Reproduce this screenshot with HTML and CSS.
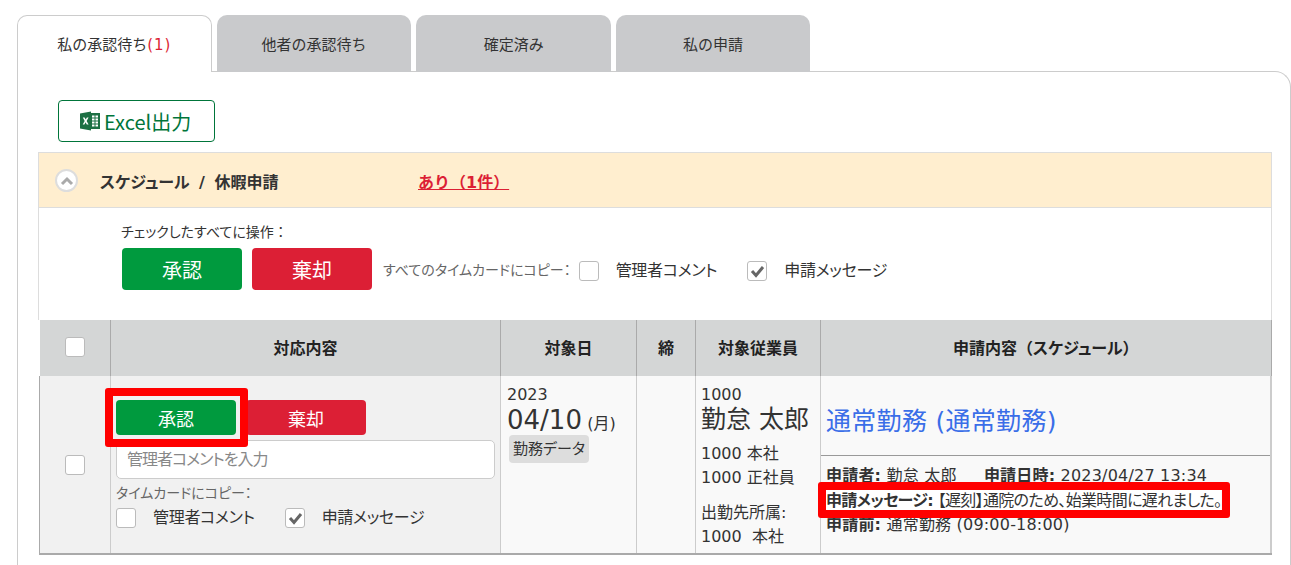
FILE: index.html
```html
<!DOCTYPE html>
<html lang="ja">

<head>
	<meta charset="UTF-8">
	<title>承認待ち</title>
	<link rel="stylesheet" href="styles.css">
</head>

<body>
	<div class="tabs">
		<div class="tab active">私の承認待ち<span class="count">(1)</span></div>
		<div class="tab">他者の承認待ち</div>
		<div class="tab">確定済み</div>
		<div class="tab">私の申請</div>
	</div>
	<div class="panel">
		<button class="excel-btn">
			<svg class="excel-icon" viewBox="0 0 20 20" width="20" height="20">
				<path fill="#1d7044" d="M7 2h13v16H7z" />
				<path fill="#fff" d="M12 4.500h2.500v2H12zM15.500 4.500H18v2h-2.500zM12 7.500h2.500v2H12zM15.500 7.500H18v2h-2.500zM12 10.500h2.500v2H12zM15.500 10.500H18v2h-2.500zM12 13.500h2.500v2H12zM15.500 13.500H18v2h-2.500z" />
				<path fill="#1d7044" d="M0 2.500L11 .5v19l-11-2z" />
				<path fill="#fff" d="M2.800 6.500h1.800l1.100 2.100 1.200-2.100h1.700l-2 3.400 2 3.500h-1.800l-1.200-2.200-1.200 2.200h-1.700l2-3.500z" />
			</svg>
			Excel出力
		</button>

		<div class="section">
			<div class="section-head">
				<span class="toggle">
					<svg viewBox="0 0 14 10" width="14" height="10">
						<path d="M2 8l5-5 5 5" fill="none" stroke="#aaa" stroke-width="3" />
					</svg>
				</span>
				<span class="section-title">スケジュール / 休暇申請</span>
				<a class="section-count">あり（1件）</a>
			</div>

			<div class="bulk">
				<div class="bulk-label">チェックしたすべてに操作<span class="wide">：</span></div>
				<div class="bulk-row">
					<button class="btn btn-ok">承認</button>
					<button class="btn btn-ng">棄却</button>
					<span class="copy-label">すべてのタイムカードにコピー：</span>
					<span class="check"></span>
					<span class="check-text">管理者コメント</span>
					<span class="check checked">
						<svg viewBox="0 0 20 20" width="20" height="20">
							<path d="M5 10l4 4.500 7-8.500" fill="none" stroke="#666" stroke-width="3" />
						</svg>
					</span>
					<span class="check-text">申請メッセージ</span>
				</div>
			</div>

			<table class="list">
				<thead>
					<tr>
						<th class="col-check"><span class="check"></span></th>
						<th class="col-action">対応内容</th>
						<th class="col-date">対象日</th>
						<th class="col-close">締</th>
						<th class="col-emp">対象従業員</th>
						<th>申請内容<span class="wide">（</span>スケジュール<span class="wide">）</span></th>
					</tr>
				</thead>
				<tbody>
					<tr>
						<td class="cell-check"><span class="check"></span></td>
						<td class="cell-action">
							<div class="row-btns">
								<span class="mark-wrap">
									<button class="btn btn-small btn-ok">承認</button>
									<span class="mark mark-ok"></span>
								</span>
								<button class="btn btn-small btn-ng">棄却</button>
							</div>
							<input class="comment" type="text" placeholder="管理者コメントを入力">
							<div class="row-copy-label">タイムカードにコピー：</div>
							<div class="row-copy">
								<span class="check"></span>
								<span class="check-text">管理者コメント</span>
								<span class="check checked">
									<svg viewBox="0 0 20 20" width="20" height="20">
										<path d="M5 10l4 4.500 7-8.500" fill="none" stroke="#666" stroke-width="3" />
									</svg>
								</span>
								<span class="check-text">申請メッセージ</span>
							</div>
						</td>
						<td class="cell-date">
							<div>2023</div>
							<div class="date-main">04/10 <small>(月)</small></div>
							<span class="chip">勤務データ</span>
						</td>
						<td class="cell-close"></td>
						<td class="cell-emp">
							<div>1000</div>
							<div class="emp-name">勤怠 太郎</div>
							<div class="emp-line">1000 本社</div>
							<div class="emp-line">1000 正社員</div>
							<div class="emp-line emp-gap">出勤先所属:</div>
							<div class="emp-line">1000&nbsp; 本社</div>
						</td>
						<td class="cell-detail">
							<a class="detail-link">通常勤務 (通常勤務)</a>
							<div class="detail-info">
								<div class="info-line"><b>申請者:</b> 勤怠 太郎 <b class="info-gap">申請日時:</b> 2023/04/27 13:34</div>
								<div class="info-line msg-line mark-wrap"><b>申請メッセージ:</b> 【遅刻】通院のため、始業時間に遅れました。<span class="mark mark-msg"></span></div>
								<div class="info-line"><b>申請前:</b> 通常勤務 (09:00-18:00)</div>
							</div>
						</td>
					</tr>
				</tbody>
			</table>
		</div>
	</div>
</body>

</html>
```

FILE: styles.css
```css
html {
	overflow: hidden;
}

body {
	margin: 0;
	padding: 15px 0 0 17px;
	height: 565px;
	overflow: hidden;
	box-sizing: border-box;
	font-family: "DejaVu Sans", "Noto Sans CJK JP", sans-serif;
	font-size: 16px;
	font-feature-settings: "palt";
	color: #333;
	background-color: #fff;
}

.wide {
	font-feature-settings: normal;
}

.tabs {
	display: flex;
	gap: 5px;
	height: 57px;
	margin-bottom: -1px;
}

.tab {
	position: relative;
	width: 194.670px;
	height: 57px;
	box-sizing: border-box;
	padding-top: 20px;
	text-align: center;
	font-size: 15px;
	font-feature-settings: normal;
	line-height: 20px;
	background-color: #c9cacc;
	border-radius: 10px 10px 0 0;
}

.tab:last-child {
	width: 194px;
}

.tab.active {
	background-color: #fff;
	border: 1px solid #ccc;
	border-bottom: none;
	padding-top: 19px;
	z-index: 1;
}

.count {
	color: #dc1f35;
	letter-spacing: 1px;
}

.panel {
	height: 494px;
	box-sizing: border-box;
	border: 1px solid #ccc;
	border-bottom: none;
	border-radius: 0 16px 0 0;
	padding: 28px 18px 0 20px;
}

.excel-btn {
	display: flex;
	align-items: center;
	gap: 4px;
	width: 157px;
	height: 42px;
	margin-left: 20px;
	padding: 0 0 0 21px;
	background-color: #fff;
	border: 1px solid #00753a;
	border-radius: 4px;
	color: #00753a;
	font-family: "Noto Sans CJK JP", sans-serif;
	font-size: 20px;
}

.section {
	margin-top: 10px;
}

.section-head {
	display: flex;
	align-items: center;
	height: 56px;
	box-sizing: border-box;
	background-color: #ffeecf;
	border: 1px solid #ddd;
	padding: 1px 0 0 16px;
	font-weight: bold;
}

.toggle {
	display: flex;
	align-items: center;
	justify-content: center;
	width: 23px;
	height: 23px;
	box-sizing: border-box;
	border: 2px solid #ddd;
	border-radius: 50%;
	background-color: #fff;
}

.section-title {
	width: 318px;
	margin-left: 22px;
	word-spacing: 4px;
}

.section-count {
	color: #dc1f35;
	text-decoration: underline;
	font-feature-settings: normal;
}

.bulk {
	border-left: 1px solid #ddd;
	border-right: 1px solid #ddd;
	padding: 14px 0 30px 82px;
}

.bulk-label {
	font-size: 14px;
	line-height: 20px;
	margin-bottom: 6px;
}

.bulk-row {
	display: flex;
	align-items: center;
	padding-left: 1px;
}

.btn {
	width: 120px;
	height: 42px;
	border: none;
	border-radius: 4px;
	color: #fff;
	font-family: inherit;
	font-size: 20px;
}

.btn-ok {
	background-color: #009a3e;
}

.btn-ng {
	margin-left: 10px;
	background-color: #dc1f35;
}

.copy-label {
	margin-left: 11px;
	margin-right: 8px;
	font-size: 14px;
	color: #666;
}

.check {
	display: inline-block;
	width: 20px;
	height: 20px;
	box-sizing: border-box;
	border: 1px solid #bbb;
	border-radius: 3px;
	background-color: #fff;
	vertical-align: middle;
	flex: none;
}

.bulk-row .check,
.row-copy .check {
	margin-top: 4px;
}

.check svg {
	display: block;
	margin: -1px;
}

.check-text {
	margin-left: 17px;
	margin-right: 30px;
	letter-spacing: -0.300px;
}

.list {
	width: 1233px;
	margin-left: 1px;
	border-collapse: collapse;
	table-layout: fixed;
}

.list th {
	height: 56px;
	padding: 0 0 2px;
	box-sizing: border-box;
	background-color: #d4d6d6;
	border-left: 1px solid #aaa;
	font-size: 16px;
	color: #222;
}

.list th:first-child {
	border-left: none;
}

.list th:last-child {
	border-right: 1px solid #aaa;
}

.col-check {
	width: 71px;
}

.col-action {
	width: 390px;
}

.col-date {
	width: 136px;
}

.col-close {
	width: 59px;
}

.col-emp {
	width: 125px;
}

.list td {
	height: 178px;
	padding: 0;
	box-sizing: border-box;
	vertical-align: top;
	background-color: #f9f9f9;
	border-left: 1px solid #ccc;
	border-bottom: 2px solid #aaa;
}

.list td:last-child {
	border-right: 2px solid #ccc;
}

.list .cell-check {
	text-align: center;
	vertical-align: middle;
	background-color: #f1f1f1;
	border-left: 1px solid #aaa;
}

.list .cell-action {
	padding: 24px 5px 0;
	background-color: #f1f1f1;
}

.row-btns {
	display: flex;
}

.btn-small {
	height: 35px;
	font-size: 18px;
	display: block;
}

.mark-wrap {
	position: relative;
}

.mark {
	position: absolute;
	border: 8px solid #f00;
	border-radius: 3px;
	box-sizing: border-box;
	pointer-events: none;
}

.mark-ok {
	left: -11px;
	top: -12px;
	width: 143px;
	height: 59px;
}

.mark-msg {
	left: -7px;
	top: -7px;
	width: 412px;
	height: 36px;
}

.comment {
	display: block;
	width: 379px;
	height: 39px;
	box-sizing: border-box;
	margin-top: 5px;
	padding: 0 10px;
	border: 1px solid #ccc;
	border-radius: 5px;
	font-family: inherit;
	font-size: 16px;
	font-feature-settings: "palt";
	letter-spacing: -1px;
}

.comment::placeholder {
	color: #888;
}

.row-copy-label {
	margin-top: 4px;
	font-size: 14px;
	line-height: 20px;
	color: #666;
}

.row-copy {
	margin-top: 1px;
	display: flex;
	align-items: center;
}

.cell-date,
.cell-emp {
	line-height: 20px;
}

.list .cell-date {
	padding: 9px 6px 0;
}

.date-main {
	font-size: 26px;
	line-height: 30px;
	word-spacing: -3px;
}

.date-main small {
	font-size: 16px;
}

.chip {
	display: inline-block;
	margin: -5px 0 0 2px;
	padding: 0 4px;
	font-size: 15px;
	line-height: 28px;
	background-color: #ddd;
	border-radius: 4px;
}

.list .cell-emp {
	padding: 9px 5px 0;
}

.emp-name {
	font-size: 25px;
	line-height: 30px;
}

.emp-line {
	line-height: 24px;
}

.emp-gap {
	margin-top: 11px;
}

.emp-name + .emp-line {
	margin-top: 7px;
}

.detail-link {
	display: block;
	height: 80px;
	padding: 28px 0 0 5px;
	box-sizing: border-box;
	font-size: 25px;
	line-height: 36px;
	letter-spacing: 0.300px;
	color: #3a6ee8;
	border-bottom: 1px solid #999;
}

.detail-info {
	padding: 8px 5px 0;
}

.info-line {
	font-size: 16px;
	line-height: 24.500px;
	letter-spacing: 0.200px;
	white-space: nowrap;
}

.msg-line {
	width: 396px;
	margin-left: -1px;
	padding-left: 1px;
	box-sizing: border-box;
	letter-spacing: -0.650px;
	background-color: #fff;
}

.info-gap {
	margin-left: 22px;
}
```
